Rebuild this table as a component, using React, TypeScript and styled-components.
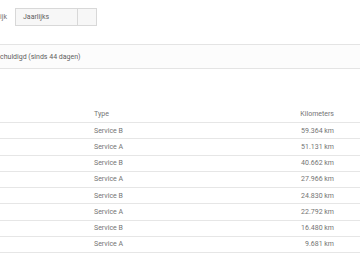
import styled, { createGlobalStyle } from "styled-components";

const services = [
  { type: "Service B", km: "59.364 km" },
  { type: "Service A", km: "51.131 km" },
  { type: "Service B", km: "40.662 km" },
  { type: "Service A", km: "27.966 km" },
  { type: "Service B", km: "24.830 km" },
  { type: "Service A", km: "22.792 km" },
  { type: "Service B", km: "16.480 km" },
  { type: "Service A", km: "9.681 km" },
];

const App = () => {
  return (
    <Page>
      <GlobalStyle />
      <FilterRow>
        <FilterLabel>ijk</FilterLabel>
        <SelectBox>
          <SelectValue>Jaarlijks</SelectValue>
          <SelectToggle />
        </SelectBox>
      </FilterRow>

      <StatusBand>chuldigd (sinds 44 dagen)</StatusBand>

      <ServiceTable>
        <HeaderRow>
          <Cell />
          <Cell>Type</Cell>
          <KmCell>Kilometers</KmCell>
        </HeaderRow>
        {services.map((service, index) => (
          <Row key={index}>
            <Cell />
            <Cell>{service.type}</Cell>
            <KmCell>{service.km}</KmCell>
          </Row>
        ))}
      </ServiceTable>
    </Page>
  );
};

export default App;

const GlobalStyle = createGlobalStyle`
  html, body {
    margin: 0;
    padding: 0;
    background: #ffffff;
  }
  body {
    font-family: Roboto, "Liberation Sans", sans-serif;
    -webkit-font-smoothing: antialiased;
  }
`;

const Page = styled.div`
  width: 360px;
  height: 270px;
  overflow: hidden;
  color: #747474;
  font-size: 7px;
`;

const FilterRow = styled.div`
  display: flex;
  align-items: center;
  gap: 7px;
  padding-top: 8px;
`;

const FilterLabel = styled.span`
  width: 8px;
`;

const SelectBox = styled.div`
  display: flex;
  width: 82px;
  height: 18px;
  box-sizing: border-box;
  border: 1px solid #d8d8d8;
  background: #f7f7f7;
`;

const SelectValue = styled.div`
  flex: 1;
  display: flex;
  align-items: center;
  padding-left: 7px;
  color: #5f5f5f;
`;

const SelectToggle = styled.div`
  width: 18px;
  border-left: 1px solid #d8d8d8;
`;

const StatusBand = styled.div`
  margin-top: 18px;
  height: 23px;
  display: flex;
  align-items: center;
  border-top: 1px solid #e4e4e4;
  border-bottom: 1px solid #e4e4e4;
  background: #fcfcfc;
  color: #5f5f5f;
`;

const ServiceTable = styled.div`
  display: flex;
  flex-direction: column;
  margin-top: 38px;
`;

const Row = styled.div`
  display: grid;
  grid-template-columns: 94px 1fr auto;
  align-items: center;
  height: 16.25px;
  box-sizing: border-box;
  padding-right: 26px;
  border-bottom: 1px solid #e6e6e6;
`;

const HeaderRow = styled(Row)`
  height: 16px;
  padding-bottom: 2px;
`;

const Cell = styled.div`
  white-space: nowrap;
`;

const KmCell = styled(Cell)`
  text-align: right;
`;
